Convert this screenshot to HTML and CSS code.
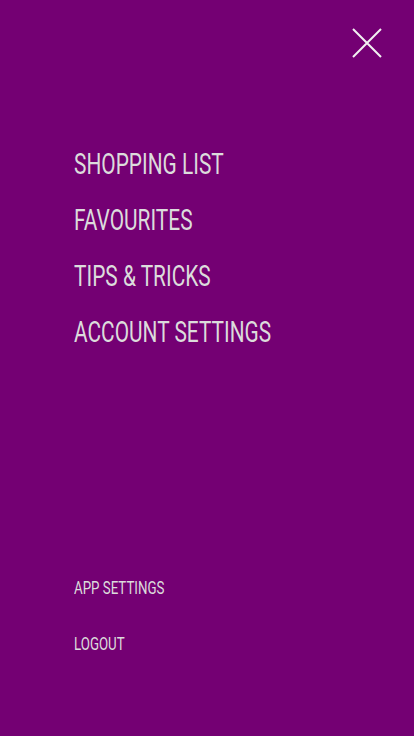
FILE: index.html
```html
<!DOCTYPE html>
<html>
<head>
<meta charset="utf-8">
<link rel="stylesheet" href="styles.css">
</head>
<body>
<div class="menu">
  <header class="top">
    <button class="close" aria-label="Close">
      <svg width="30" height="30" viewBox="0 0 30 30"><path d="M1 1L29 29M29 1L1 29" stroke="#f2f2f2" stroke-width="2" fill="none"/></svg>
    </button>
  </header>
  <nav class="main">
    <a class="item big"><span>SHOPPING LIST</span></a>
    <a class="item big"><span>FAVOURITES</span></a>
    <a class="item big"><span>TIPS &amp; TRICKS</span></a>
    <a class="item big"><span>ACCOUNT SETTINGS</span></a>
  </nav>
  <nav class="bottom">
    <a class="item small"><span>APP SETTINGS</span></a>
    <a class="item small"><span>LOGOUT</span></a>
  </nav>
</div>
</body>
</html>
```
FILE: styles.css
```css
html, body { margin: 0; padding: 0; }
body { background: #740073; font-family: Roboto, "Liberation Sans", sans-serif; }
.menu { height: 736px; display: flex; flex-direction: column; }
.top { display: flex; justify-content: flex-end; padding: 28px 32px 0 0; }
.close { background: none; border: 0; padding: 0; width: 30px; height: 30px; display: block; }
.close svg { display: block; }
.main { display: flex; flex-direction: column; padding: 78px 0 0 74px; }
.item { color: #dcdcdc; display: block; white-space: nowrap; }
.item span { display: inline-block; transform-origin: left center; }
.big { font-size: 29px; line-height: 56px; height: 56px; }
.big span { transform: scaleX(0.72); }
.small { font-size: 19px; line-height: 56px; height: 56px; }
.small span { transform: scaleX(0.70); }
.bottom { margin-top: auto; padding: 0 0 64px 74px; display: flex; flex-direction: column; }
```
